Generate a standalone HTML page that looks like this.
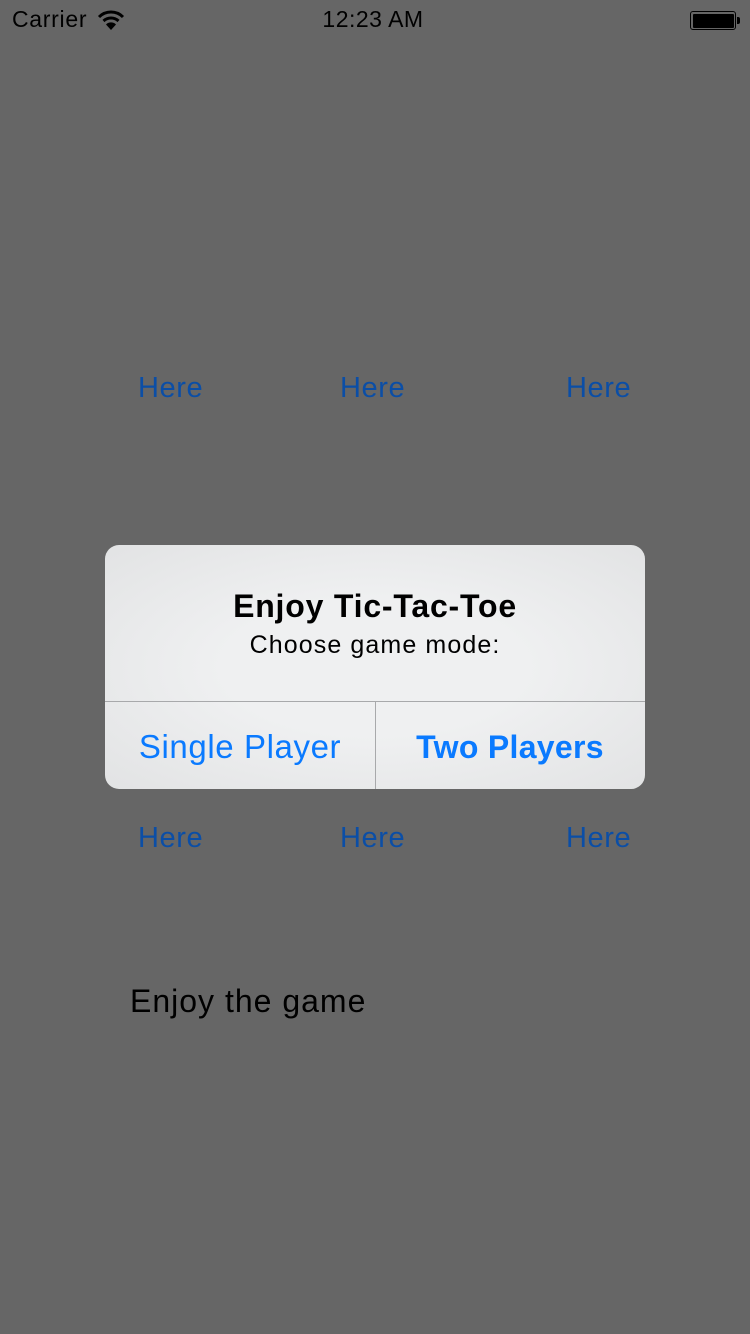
<!DOCTYPE html>
<html><head><meta charset="utf-8"><style>
*{margin:0;padding:0;box-sizing:border-box}
body{width:750px;height:1334px;background:#666;font-family:"Liberation Sans",sans-serif;position:relative;overflow:hidden}
.a{position:absolute;white-space:nowrap}
.h{color:#0b4ea6;font-size:29px;letter-spacing:0.6px;top:372px}
.h2{top:822px}
</style></head><body>
<div class="a" style="left:12px;top:6px;font-size:23px;letter-spacing:0.7px;color:#000">Carrier</div>
<svg class="a" style="left:97px;top:9px" width="28" height="22" viewBox="0 0 28 22"><path d="M2 8 A17 17 0 0 1 26 8" stroke="#000" stroke-width="3" fill="none"/><path d="M6.5 12 A11 11 0 0 1 21.5 12" stroke="#000" stroke-width="3" fill="none"/><path d="M14 21 L9 15.5 A7 7 0 0 1 19 15.5 Z" fill="#000"/></svg>
<div class="a" style="left:0;width:746px;text-align:center;top:6px;font-size:23px;letter-spacing:0.5px;color:#000">12:23 AM</div>
<div class="a" style="left:690px;top:11px;width:46px;height:19px;border:1.5px solid #000;border-radius:3px;padding:1.5px"><div style="background:#000;width:100%;height:100%;border-radius:1px"></div></div>
<div class="a" style="left:737px;top:17px;width:3px;height:7px;background:#000;border-radius:0 2px 2px 0"></div>

<div class="a h" style="left:138px">Here</div>
<div class="a h" style="left:340px">Here</div>
<div class="a h" style="left:566px">Here</div>
<div class="a h h2" style="left:138px">Here</div>
<div class="a h h2" style="left:340px">Here</div>
<div class="a h h2" style="left:566px">Here</div>
<div class="a" style="left:130px;top:983px;font-size:32px;letter-spacing:1px;color:#000">Enjoy the game</div>

<div class="a" style="left:105px;top:545px;width:540px;height:244px;border-radius:14px;background:radial-gradient(ellipse at center,#eff0f1 40%,#e2e3e4 100%);overflow:hidden">
<div class="a" style="left:0;width:540px;top:43px;text-align:center;font-size:32px;letter-spacing:0.8px;font-weight:bold;color:#000">Enjoy Tic-Tac-Toe</div>
<div class="a" style="left:0;width:540px;top:86px;text-align:center;font-size:25px;letter-spacing:1.1px;color:#000">Choose game mode:</div>
<div class="a" style="left:0;top:156px;width:540px;height:1px;background:#a8a9ab"></div>
<div class="a" style="left:270px;top:156px;width:1px;height:88px;background:#a8a9ab"></div>
<div class="a" style="left:0;width:270px;top:183px;text-align:center;font-size:33px;letter-spacing:0.6px;color:#0a7aff">Single Player</div>
<div class="a" style="left:270px;width:270px;top:184px;text-align:center;font-size:32px;letter-spacing:0.3px;font-weight:bold;color:#0a7aff">Two Players</div>
</div>
</body></html>
